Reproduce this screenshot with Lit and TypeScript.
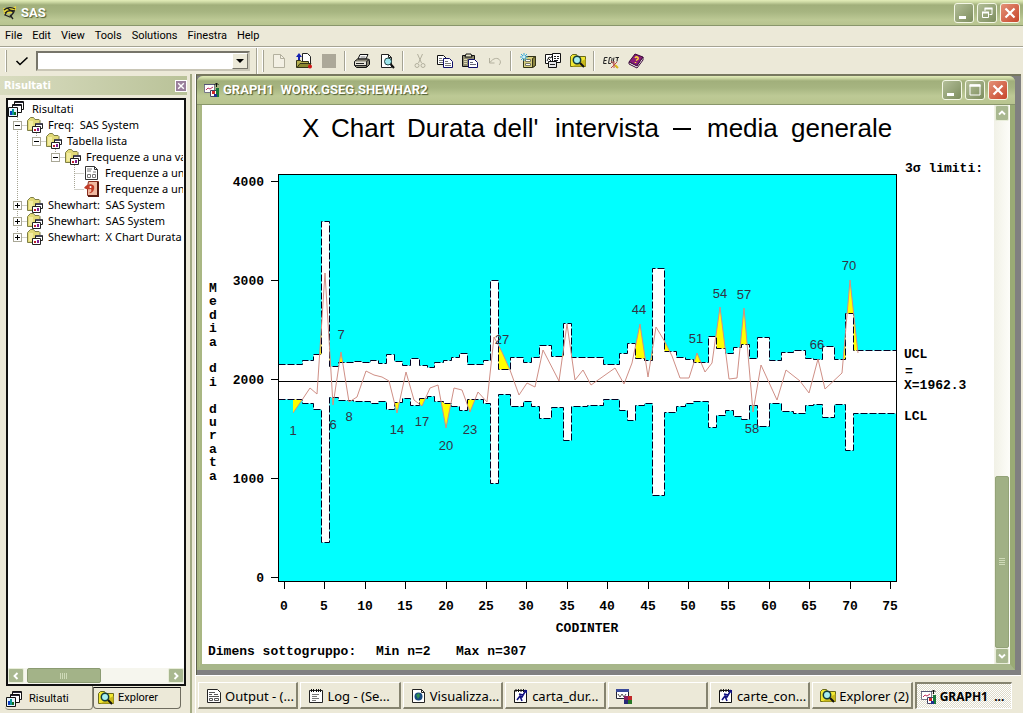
import { LitElement, html, svg, css, nothing } from "lit";
import { customElement, property } from "lit/decorators.js";
import { classMap } from "lit/directives/class-map.js";

const folder = svg`<path d="M.5 13.500V3.500l3-3h3l1.500 2h4l1 1v10z" fill="#e2da78" stroke="#7e7e46"/><path d="M2 4h4v8H2z" fill="#f2eca0"/><path d="M8.500 6.500h7v5h-7z" fill="#fff" stroke="#222"/><path d="M9 6h6v2H9z" fill="#445"/><path d="M5.500 9.500h8v6h-8z" fill="#fff" stroke="#222"/><path d="M7 12h2v2H7z" fill="#c02030"/><path d="M10 11h2v3h-2z" fill="#802090"/>`;
const results = svg`<path d="M6.500.5h9v8h-9z" fill="#fff" stroke="#111"/><path d="M7 1h8v1H7z" fill="#223"/><path d="M4.500 3.500h9v8h-9z" fill="#fff" stroke="#111"/><path d="M5 4h8v1H5z" fill="#223"/><path d="M.5 6.500h9v9h-9z" fill="#e8f4ff" stroke="#111"/><path d="M2 10h2v4H2z" fill="#0a3cc0"/><path d="M4 8h2v6H4z" fill="#0a9a9a"/><path d="M6 11h2v3H6z" fill="#107020"/>`;
const explorer = svg`<path d="M.5 13.500v-10l2-2h4l1 2h8v10z" fill="#f2e832" stroke="#6b6b1a"/><path d="M2 13.500h13.500V6z" fill="#c9b91c"/><circle cx="7" cy="7" r="3.700" fill="#a8f0f0" stroke="#143c3c" stroke-width="1.500"/><path d="M10 10l4 4" stroke="#111" stroke-width="2"/>`;
const chartWin = svg`<path d="M.5 2.500h10v8H.5z" fill="#fff" stroke="#778"/><path d="M0 2h11v1H0z" fill="#557"/><path d="M2 8l2-2 2 1 3-2" fill="none" stroke="#c03060"/><path d="M12.500 1v4M10.500 3l2-2 2 2" stroke="#111" fill="none"/><path d="M6.500 8.500h6v6h-6z" fill="#fff" stroke="#446"/><path d="M8 9h3v3H8z" fill="#d02828"/><path d="M12 6h3v9h-3z" fill="#187838"/><path d="M10 12h3v3h-3z" fill="#203090"/>`;
const program = svg`<path d="M1.500 2.500h12v12h-12z" fill="#fff" stroke="#111"/><path d="M3 1v3M5.500 1v3M8 1v3M10.500 1v3" stroke="#111"/><path d="M4 12l3-4 2 1 4-7M6 6l4 1M7 8l2 5" stroke="#101080" stroke-width="1.600" fill="none"/><path d="M10 2h4v4z" fill="#101080"/>`;

const icons: Record<string, unknown> = {
  folder, results, explorer, chartWin, program,
  sas: svg`<path d="M1 3h9l4-2v4l-4 3-8 1z" fill="#e8d838"/><path d="M2 5c3-3 8-3 11-1M3 8c3-3 6-3 10-2M5 6l-2 4 5 2 4-5M8 10l3 4M5 3l6 4" fill="none" stroke="#222" stroke-width="1.300"/>`,
  report: svg`<path d="M1.500 1.500h9l3 3v10h-12z" fill="#fff" stroke="#333"/><path d="M10.500 1.500v3h3" fill="none" stroke="#333"/><path d="M3 4h5M3 6h4M9 7h3M3.500 9.500h3v3h-3zM8.500 9.500h3v3h-3z" fill="none" stroke="#777"/>`,
  html: svg`<path d="M4.500.5h10v14h-11V6z" fill="#f0b8a0" stroke="#8b2f20"/><path d="M14 1v14H4" fill="none" stroke="#5a1a10" stroke-width="2"/><path d="M0 7c2-4 8-5 10-2 1 4-2 8-5 7 2-1 3-2 2-4-2 0-4 1-7-1z" fill="#c03c28"/><circle cx="6.500" cy="6" r="1" fill="#fff"/>`,
  output: svg`<path d="M1.500 1.500h10l3 3v10h-13z" fill="#fff" stroke="#222"/><path d="M3 4.500h6M3 6.500h3M8 6.500h4M3 8.500h10M3.500 10.500h3v2h-3zM8.500 10.500h4v2h-4z" fill="none" stroke="#555"/>`,
  log: svg`<path d="M1.500 2.500h13v12h-13z" fill="#fff" stroke="#222"/><path d="M3.500 1v3M5.500 1v3M8.500 1v3M10.500 1v3M12.500 1v3" stroke="#111"/><path d="M4 6.500h7M4 8.500h5M4 10.500h7M4 12.500h4" stroke="#777"/>`,
  viewer: svg`<path d="M1.500 1.500h9l3 3v10h-12z" fill="#fff" stroke="#222"/><path d="M10.500 1.500v3h3" fill="none" stroke="#222"/><circle cx="7.500" cy="8.500" r="4" fill="#174a80"/><path d="M5 7l3-2 1 3-2 3z" fill="#2f8f50"/>`,
  editor: svg`<path d="M.5 1.500h12v9H.5z" fill="#fff" stroke="#223"/><path d="M0 1h13v3H0z" fill="#3a4a9a"/><path d="M2 6l2 3 2-3 2 3 2-3" fill="none" stroke="#555"/><path d="M8 8h4v4H8z" fill="#8a2060"/><path d="M12 8h4v4h-4z" fill="#c02828"/><path d="M8 12h4v4H8z" fill="#282878"/><path d="M12 12h4v4h-4z" fill="#287828"/>`,
  check: svg`<path d="M2.500 8l3.500 3.500L13.500 4.500" fill="none" stroke="#000" stroke-width="1.600"/>`,
  newDoc: svg`<path d="M2.500 1.500h7l4 4v9h-11z" fill="#f3f0e4" stroke="#b3b09e"/><path d="M9.500 1.500v4h4" fill="none" stroke="#b3b09e"/>`,
  open: svg`<path d="M6.500.5h5l3 3v8h-8z" fill="#fff" stroke="#222"/><path d="M3 0L0 4h2v4h2V4h2z" fill="#1420b0"/><path d="M.5 14.500v-7h4l1 1h7v6z" fill="#b6b050" stroke="#333318"/><path d="M1 14.500l3-4h11l-3 4z" fill="#8a8630" stroke="#333318"/><circle cx="14" cy="13.500" r="2" fill="#d01818"/>`,
  save: svg`<path d="M1 1h14v14H1z" fill="#aca899"/>`,
  print: svg`<path d="M4 6l2-4.500h8L12 6z" fill="#fff" stroke="#111"/><path d="M6.500 4h5" stroke="#777"/><path d="M.5 8.500l3-2.500h11l1 1.500v4l-3 3H2.500l-2-2z" fill="#8a8776" stroke="#111"/><path d="M1 8.500h11v4H1z" fill="#e8e5da"/><path d="M12.500 8.500l3-2M12.500 8.500v5.500M1 12.500h11M2 10.500h8" stroke="#222"/>`,
  preview: svg`<path d="M2.500 1.500h7l3 3v10h-10z" fill="#fff" stroke="#222"/><path d="M9.500 1.500v3h3" fill="none" stroke="#222"/><circle cx="9" cy="8.500" r="3.500" fill="#a0e8ee" stroke="#244"/><path d="M11.500 11l3.500 4" stroke="#111" stroke-width="2"/>`,
  cut: svg`<path d="M5.500 1l4 9M10.500 1l-4 9" stroke="#b3b09e" fill="none"/><circle cx="5" cy="12.500" r="2" fill="none" stroke="#b3b09e"/><circle cx="11" cy="12.500" r="2" fill="none" stroke="#b3b09e"/>`,
  copy: svg`<path d="M.5 2.500h6l3 3v6h-9z" fill="#fff" stroke="#111"/><path d="M2 5.500h3M2 7.500h5M2 9.500h5" stroke="#777"/><path d="M6.500 5.500h6l3 3v6h-9z" fill="#fff" stroke="#10106a"/><path d="M8 8.500h3M8 10.500h6M8 12.500h6" stroke="#777"/>`,
  paste: svg`<path d="M.5 2.500h12v11H.5z" fill="#8f8c70" stroke="#111"/><path d="M3 4h7l-1-3H4z" fill="#e9e6c8" stroke="#111"/><path d="M2 6.500h3M2 8.500h3M2 10.500h3" stroke="#ded9b0"/><path d="M6.500 6.500h6l3 3v5h-9z" fill="#fff" stroke="#10106a"/><path d="M8 9.500h3M8 11.500h6" stroke="#667"/>`,
  undo: svg`<path d="M2.500 5v5h5M3 9.500c3-4.500 8-5.500 10-2 1 2 0 3.500-1 4.500" fill="none" stroke="#b3b09e"/>`,
  library: svg`<path d="M3.500 5.500l3-2h9v9l-3 2h-9z" fill="#d8cf7c" stroke="#333318"/><path d="M12.500 5.500l3-2v9l-3 2z" fill="#8c8540" stroke="#333318"/><path d="M5.500 6.500h5v2h-5zM5.500 10.500h5v2h-5z" fill="#fff" stroke="#776"/><path d="M4 0v8M0 4h8M1 1l6 6M7 1L1 7" stroke="#35a8d8"/><circle cx="4" cy="4" r="1.500" fill="#c8f0ff"/>`,
  windows: svg`<path d="M.5 1.500h8v9h-8z" fill="#fff" stroke="#111"/><path d="M7.500.5h8v9h-8z" fill="#fff" stroke="#111"/><path d="M3.500 8.500h8v6h-8z" fill="#e8e8e8" stroke="#111"/><path d="M2 8l2-4 2 1 1-2M3 5l3 3M9 3.500h2M9 5.500h2M12 3.500h2M12 5.500h2M9 7.500h4M5 11.500h5" stroke="#222" fill="none"/>`,
  edit: svg`<path d="M4.500 4.500h-3l-1 6h3M1 7.500h2.500M5.500 10.500l1-6h1.500l1 1-.5 4-1 1zM10 10l1-5.500M12.500 4.500h3.500M14.500 4.500l-.500 4" fill="none" stroke="#222"/><path d="M8 8l6 7M14 9l-6 6M11 8v7" stroke="#b84a4a"/><path d="M12 12l3 3" stroke="#d8b820" stroke-width="2"/>`,
  help: svg`<path d="M1 9l6-8 8 3-6 9z" fill="#8a1c78" stroke="#3a0838"/><path d="M1 9l8 4 6-9v3l-6 8-8-4z" fill="#fff" stroke="#3a0838"/><path d="M7 5c1-2 4-1 3 1L8 7.500M7.500 9v1" fill="none" stroke="#ffd83a" stroke-width="1.500"/>`,
  min: svg`<path d="M3 11h7v3H3z" fill="#fff"/>`,
  max: svg`<path d="M3 3h10v10H3z" fill="none" stroke="#fff"/><path d="M2.500 3.500h11" stroke="#fff" stroke-width="2.500"/>`,
  restore: svg`<path d="M6 6V3.500h7v6h-2.500" fill="none" stroke="#fff"/><path d="M5.500 3.500h8" stroke="#fff" stroke-width="2"/><path d="M3.500 7.500h6v5h-6z" fill="none" stroke="#fff"/><path d="M3 7.500h7" stroke="#fff" stroke-width="2"/>`,
  close: svg`<path d="M3.500 3.500l9 9M12.500 3.500l-9 9" stroke="#fff" stroke-width="2.200"/>`,
  up: svg`<path d="M4 10l4-4 4 4" fill="none" stroke="#fff" stroke-width="2.500"/>`,
  down: svg`<path d="M4 6l4 4 4-4" fill="none" stroke="#fff" stroke-width="2.500"/>`,
  left: svg`<path d="M10 4L6 8l4 4" fill="none" stroke="#fff" stroke-width="2.500"/>`,
  right: svg`<path d="M6 4l4 4-4 4" fill="none" stroke="#fff" stroke-width="2.500"/>`,
};

const icon = (name: string) =>
  html`<svg class="icon" viewBox="0 0 16 16" width="16" height="16" aria-hidden="true">${icons[name]}</svg>`;

const iconCss = css`
  :host { display: block; box-sizing: border-box; }
  * { box-sizing: border-box; }
  .icon { display: block; flex: none; }
  button { font: inherit; color: inherit; margin: 0; padding: 0; border: 0; background: none; }
`;

/* Title bar with the three caption buttons */
@customElement("caption-bar")
class CaptionBar extends LitElement {
  @property() icon = "sas";
  @property() label = "";
  @property() middle = "restore";
  static styles = [iconCss, css`
    .bar {
      display: flex; align-items: center; height: 100%; gap: 3px; padding: 0 var(--end, 3px) 0 var(--start, 2px);
      background: linear-gradient(#e3edb9 0, #cdd9a4 2px, #a1af7b 5px, #a7b581 12px, #bdc995 20px, #b8c48f 100%);
      border-bottom: 1px solid #89966b;
    }
    .title {
      flex: 1; margin: 0; white-space: pre; color: #fff; font: bold 13px/18px Roboto, "Trebuchet MS", sans-serif;
      text-shadow: 1px 1px 1px #4c5a30;
    }
    .btn {
      width: 20px; height: 20px; display: grid; place-items: center; border: 1px solid #f4f7e6;
      border-radius: 3px; background: linear-gradient(135deg, #b3be98, #7d8d5e);
    }
    .close { background: linear-gradient(135deg, #e39278, #c8452b); }
  `];
  render() {
    return html`<div class="bar">
      ${icon(this.icon)}
      <h1 class="title">${this.label}</h1>
      <button class="btn" aria-label="Riduci a icona">${icon("min")}</button>
      <button class="btn" aria-label="Ingrandisci">${icon(this.middle)}</button>
      <button class="btn close" aria-label="Chiudi">${icon("close")}</button>
    </div>`;
  }
}

type Step = [number, number];
/* [right edge, level] of each step of the control limits */
const UPPER: Step[] = [
  [302, 364], [313, 360], [321, 354], [329, 221], [338, 366], [353, 362], [362, 361], [370, 362], [378, 360], [386, 363],
  [394, 354], [402, 361], [410, 365], [419, 358], [427, 365], [434, 367], [443, 362], [451, 360], [459, 357], [467, 353],
  [483, 364], [490, 360], [498, 280], [510, 369], [523, 357], [531, 362], [539, 357], [551, 345], [563, 356], [571, 323],
  [603, 357], [619, 364], [627, 353], [635, 343], [644, 358], [652, 360], [664, 268], [676, 351], [685, 357], [693, 359],
  [708, 362], [716, 336], [725, 348], [733, 353], [741, 347], [749, 344], [757, 358], [769, 337], [781, 360], [793, 352],
  [805, 350], [813, 358], [822, 359], [834, 346], [845, 359], [853, 313], [896, 350],
];
const LOWER: Step[] = [
  [302, 399], [313, 403], [321, 409], [329, 542], [338, 397], [353, 400], [370, 401], [378, 403], [386, 401],
  [394, 409], [402, 402], [410, 398], [419, 405], [427, 398], [434, 396], [443, 401], [451, 403], [459, 406], [467, 410],
  [483, 399], [490, 403], [498, 483], [510, 394], [523, 406], [531, 401], [539, 406], [551, 418], [563, 407], [571, 440],
  [587, 406], [603, 405], [619, 399], [627, 410], [635, 420], [644, 405], [652, 403], [664, 495], [676, 412], [685, 406],
  [693, 403], [708, 401], [716, 427], [725, 415], [733, 410], [741, 416], [749, 419], [757, 405], [769, 426], [781, 403],
  [793, 411], [805, 413], [813, 405], [822, 404], [834, 417], [845, 404], [853, 450], [896, 413],
];
const MEANS: Step[] = [
  [293, 413], [302, 400], [310, 388], [317, 394], [325, 273], [333, 405], [341, 352], [349, 402], [357, 397], [366, 371],
  [374, 375], [382, 377], [389, 381], [397, 413], [406, 372], [414, 400], [422, 406], [430, 388], [438, 385], [446, 428],
  [454, 388], [462, 390], [470, 412], [478, 392], [487, 402], [494, 337], [502, 352], [510, 370], [519, 395], [527, 383],
  [535, 387], [543, 350], [559, 381], [567, 324], [575, 380], [583, 370], [591, 385], [615, 368], [624, 384], [632, 363],
  [640, 324], [648, 377], [656, 327], [665, 342], [672, 356], [680, 378], [689, 378], [697, 353], [705, 372], [712, 363],
  [720, 307], [729, 379], [737, 378], [744, 308], [753, 412], [761, 365], [777, 400], [786, 370], [800, 381], [809, 393],
  [818, 359], [825, 389], [842, 373], [850, 280], [858, 353],
];
const FLAGS: [string, number, number][] = [
  ["1", 293, 435], ["6", 333, 429], ["7", 341, 339], ["8", 349, 421], ["14", 397, 434], ["17", 422, 426], ["20", 446, 450],
  ["23", 470, 434], ["27", 502, 344], ["44", 639, 314], ["51", 696, 343], ["54", 720, 298], ["57", 744, 299],
  ["58", 752, 433], ["66", 817, 349], ["70", 849, 270],
];
/* Words of the heading, each with its starting x */
const HEADING: [string, number][] = [
  ["X", 302], ["Chart", 331], ["Durata", 407], ["dell'", 493], ["intervista", 555], ["media", 707], ["generale", 791],
];

const stepPath = (steps: Step[]) =>
  steps.map(([x, y], i) => `${i ? "L" : "M"}${(i ? steps[i - 1][0] : 278) + 0.5} ${y + 0.5}H${x + 0.5}`).join("");
const bandPath = () => {
  const back = LOWER.map(([x, y], i) => [x, y, i ? LOWER[i - 1][0] : 278]).reverse();
  return stepPath(UPPER) + back.map(([x, y, x0]) => `L${x + 0.5} ${y + 0.5}H${x0 + 0.5}`).join("") + "Z";
};
const line = MEANS.map((p) => p.join(",")).join(" ");

/* Shewhart mean chart */
@customElement("shewhart-chart")
class ShewhartChart extends LitElement {
  static styles = css`
    :host { display: block; min-width: 0; }
    .chart { display: block; width: 100%; height: 100%; background: #fff; }
    .heading { font: 26px "Liberation Sans", Arial, sans-serif; }
    .mono { font: bold 13px "Liberation Mono", "Courier New", monospace; white-space: pre; }
    .mid { text-anchor: middle; }
    .end { text-anchor: end; }
    .flag { font: 13px "Liberation Sans", Arial, sans-serif; text-anchor: middle; fill: #334; }
    .axis { stroke: #000; fill: none; }
    .dash { stroke: #000; stroke-width: 2; }
    .plot { fill: #0ff; }
    .out { fill: #ff0; }
    .band { fill: #fff; }
    .limit { fill: none; stroke: #002; stroke-dasharray: 7 2; }
    .mean { fill: none; stroke: #cf8f86; }
  `;
  render() {
    const ticks = Array.from({ length: 16 }, (_, i) => ({ n: i * 5, x: Math.round(284 + i * 40.4) }));
    return html`<svg class="chart" viewBox="202 105 792 559" role="img" aria-label="X Chart Durata dell' intervista">
      <text class="heading" y="137">${HEADING.map(([w, x]) => svg`<tspan x=${x}>${w}</tspan>`)}</text>
      <path class="dash" d="M673 129h18"/>
      <rect class="plot" x="278" y="174" width="618" height="407"/>
      <polygon class="out" points="293,381 ${line} 858,381"/>
      <path class="band" d=${bandPath()}/>
      <path class="limit" d=${stepPath(UPPER)}/>
      <path class="limit" d=${stepPath(LOWER)}/>
      <path class="axis" d="M278 381.500H896"/>
      <polyline class="mean" points=${line}/>
      <rect class="axis" x="278.500" y="174.500" width="618" height="407"/>
      ${FLAGS.map(([t, x, y]) => svg`<text class="flag" x=${x} y=${y}>${t}</text>`)}
      ${[0, 1, 2, 3, 4].map((k) => svg`
        <path class="axis" d="M271 ${577.5 - k * 99}h7"/>
        <text class="mono end" x="264" y=${582 - k * 99}>${k * 1000}</text>`)}
      ${ticks.map(({ n, x }) => svg`
        <path class="axis" d="M${x + 0.5} 581v8"/>
        <text class="mono mid" x=${x} y="610">${n}</text>`)}
      ${[..."Media di durata"].map((c, i) => svg`<text class="mono mid" x="213" y=${Math.round(292 + i * 13.4)}>${c}</text>`)}
      <text class="mono mid" x="587" y="632">CODINTER</text>
      <text class="mono" x="208" y="655">Dimens sottogruppo:</text>
      <text class="mono" x="376" y="655">Min n=2</text>
      <text class="mono" x="456" y="655">Max n=307</text>
      <text class="mono" x="905" y="172">3σ limiti:</text>
      <text class="mono" x="904" y="358">UCL</text>
      <text class="mono" x="905" y="375">=</text>
      <text class="mono" x="904" y="389">X=1962.3</text>
      <text class="mono" x="904" y="420">LCL</text>
    </svg>`;
  }
}

interface Row { guide: string; open?: boolean; icon: string; text: string }
/* guide: one character per indent column: T branch, L last branch, space empty, | passing line */
const TREE: Row[] = [
  { guide: "", icon: "results", text: "Risultati" },
  { guide: "T", open: true, icon: "folder", text: "Freq:  SAS System" },
  { guide: "|L", open: true, icon: "folder", text: "Tabella lista" },
  { guide: "| L", open: true, icon: "folder", text: "Frequenze a una va" },
  { guide: "|  T", icon: "report", text: "Frequenze a una" },
  { guide: "|  L", icon: "html", text: "Frequenze a una" },
  { guide: "T", open: false, icon: "folder", text: "Shewhart:  SAS System" },
  { guide: "T", open: false, icon: "folder", text: "Shewhart:  SAS System" },
  { guide: "L", open: false, icon: "folder", text: "Shewhart:  X Chart Durata d" },
];

@customElement("results-panel")
class ResultsPanel extends LitElement {
  static styles = [iconCss, css`
    .panel { height: 100%; display: flex; flex-direction: column; background: #ece9d8; padding: 2px 4px 3px 5px; }
    .head {
      display: flex; align-items: center; justify-content: space-between; height: 19px; margin: 0 -1px 3px -5px; padding: 0 0 0 4px;
      background: linear-gradient(90deg, #d9dcc0, #b9c298);
    }
    .name { margin: 0; color: #fff; font: bold 11px/16px "DejaVu Sans Condensed", Verdana, sans-serif; }
    .x { width: 12px; height: 12px; border: 1px solid #fff; background: #9a7f9c; display: grid; place-items: center; }
    .x .icon { width: 10px; height: 10px; }
    .box { flex: 1; min-height: 0; display: flex; flex-direction: column; border: 2px solid #111; background: #fff; margin-left: 1px; }
    .tree { flex: 1; list-style: none; margin: 0 1px 0 0; padding: 1px 0 0; overflow: hidden; font: 11px/16px "Noto Sans", Tahoma, sans-serif; }
    .row { display: flex; height: 16px; align-items: center; white-space: pre; }
    .row .icon { margin-right: 5px; }
    .row:first-child .icon { margin-right: 8px; }
    .cell { flex: none; width: 19px; height: 16px; display: grid; place-items: center; }
    .guide { grid-area: 1 / 1; }
    .toggle { grid-area: 1 / 1; width: 9px; height: 9px; border: 1px solid #a9a796; background: #fff; }
    .toggle .icon { width: 7px; height: 7px; }
    .scroll { display: flex; height: 16px; gap: 3px; background: #f6f6ee; }
    .arrow { width: 16px; height: 15px; border-radius: 2px; border: 1px solid #e9eeda; background: #a9b890; display: grid; place-items: center; }
    .arrow .icon { width: 14px; height: 12px; }
    .thumb { width: 74px; height: 15px; border: 1px solid #8b9b72; border-radius: 2px; background: #a3b388; display: flex; justify-content: center; align-items: center; }
    .grip { width: 8px; height: 6px; background: repeating-linear-gradient(90deg, #cfdab8 0 1px, #a3b388 1px 2px); }
    .space { flex: 1; }
    .tabs { display: flex; height: 24px; font: 11px/20px Roboto, Tahoma, sans-serif; }
    .tab { width: 88px; display: flex; align-items: center; gap: 7px; padding: 3px 0 0 1px; border-bottom: 1px solid #8a8878; border-right: 1px solid #8a8878; border-radius: 0 0 4px 4px; }
    .tab.back { height: 22px; margin-top: 1px; gap: 4px; padding: 0 0 0 4px; border: 1px solid #6f6d60; border-top-color: #111; }
  `];
  private cell(c: string, last: boolean, row: Row) {
    return html`<span class="cell">
      <svg class="guide" width="19" height="16" aria-hidden="true">
        ${c === " " ? nothing : svg`<path d="M9.500 0V${c === "L" ? 8 : 16}${c === "|" ? "" : "M9.500 8.500H19"}" stroke="#a5a392" stroke-dasharray="1 1" fill="none"/>`}
      </svg>
      ${last && row.open !== undefined
        ? html`<button class="toggle" aria-label=${row.open ? "Comprimi" : "Espandi"}><svg class="icon" viewBox="0 0 7 7" aria-hidden="true"><path d="M1 3.500h5${row.open ? "" : "M3.500 1v5"}" stroke="#000"/></svg></button>`
        : nothing}
    </span>`;
  }
  render() {
    return html`<div class="panel">
      <div class="head"><h2 class="name">Risultati</h2><button class="x" aria-label="Chiudi Risultati">${icon("close")}</button></div>
      <div class="box">
        <ul class="tree">
          ${TREE.map((row) => html`<li class="row">${[...row.guide].map((c, i) => this.cell(c, i === row.guide.length - 1, row))}${icon(row.icon)}<span>${row.text}</span></li>`)}
        </ul>
        <div class="scroll">
          <button class="arrow" aria-label="Scorri a sinistra">${icon("left")}</button>
          <div class="thumb"><span class="grip"></span></div>
          <span class="space"></span>
          <button class="arrow" aria-label="Scorri a destra">${icon("right")}</button>
        </div>
      </div>
      <div class="tabs">
        <button class="tab">${icon("results")}Risultati</button>
        <button class="tab back">${icon("explorer")}Explorer</button>
      </div>
    </div>`;
  }
}

const MENUS = ["File", "Edit", "View", "Tools", "Solutions", "Finestra", "Help"];
const TOOLS: [string, string][][] = [
  [["newDoc", "Nuovo"], ["open", "Apri"], ["save", "Salva"]],
  [["print", "Stampa"], ["preview", "Anteprima"]],
  [["cut", "Taglia"], ["copy", "Copia"], ["paste", "Incolla"], ["undo", "Annulla"]],
  [["library", "Nuova libreria"], ["windows", "Finestre"], ["explorer", "Explorer"]],
  [["edit", "Modifica grafico"], ["help", "Guida"]],
];
const TASKS: [string, string][] = [
  ["output", "Output - (..."], ["log", "Log - (Se..."], ["viewer", "Visualizza..."], ["program", "carta_dur..."],
  ["editor", ""], ["program", "carte_con..."], ["explorer", "Explorer (2)"], ["chartWin", "GRAPH1  ..."],
];

@customElement("app-root")
class AppRoot extends LitElement {
  static styles = [iconCss, css`
    :host { height: 100vh; overflow: hidden; background: #ece9d8; color: #000; }
    .app { height: 100%; display: flex; flex-direction: column; }
    .top { flex: none; height: 26px; }
    .menu { flex: none; display: flex; gap: 10px; height: 21px; padding: 1px 5px 2px; border-bottom: 1px solid #a5a393; font: 11px/18px Roboto, Tahoma, sans-serif; }
    .tools { flex: none; display: flex; align-items: center; height: 27px; border-top: 1px solid #fff; padding-left: 5px; }
    .grip { width: 2px; height: 22px; border-left: 1px solid #fff; border-right: 1px solid #a5a393; }
    .ok { width: 29px; display: grid; place-items: center; }
    .combo { position: relative; width: 214px; height: 20px; }
    .command { display: block; width: 100%; height: 20px; appearance: none; border: 2px solid #77756a; border-right-color: #c9c6b6; border-bottom-color: #c9c6b6; border-radius: 0; background: #fff; }
    .drop { position: absolute; top: 2px; right: 2px; width: 16px; height: 16px; background: #ece9d8; border: 1px solid #fff; border-right-color: #77756a; border-bottom-color: #77756a; pointer-events: none; display: grid; place-items: center; }
    .split { width: 2px; height: 26px; margin: 0 4px 0 6px; border-left: 1px solid #a5a393; border-right: 1px solid #fff; }
    .group { display: flex; }
    .tool { width: 25px; height: 22px; display: grid; place-items: center; }
    .sep { width: 2px; height: 20px; margin: 0 3px; border-left: 1px solid #a5a393; border-right: 1px solid #fff; }
    .groups { display: flex; align-items: center; padding-left: 2px; }
    .body { flex: 1; min-height: 0; display: flex; }
    .side { flex: none; width: 190px; }
    .edge { flex: none; width: 6px; background: #ece9d8; border-left: 2px solid #a3aa84; border-right: 1px solid #fff; }
    .work { flex: 1; min-width: 0; display: flex; flex-direction: column; padding-right: 2px; }
    .mdi { flex: 1; min-height: 0; display: flex; background: #808080; border-top: 2px solid #77785f; border-left: 1px solid #5c5f4a; padding: 0 6px 5px 0; }
    .child { flex: 1; min-width: 0; display: flex; flex-direction: column; background: #b1bf8a; border-radius: 6px 6px 0 0; overflow: hidden; }
    .cap { --start: 7px; --end: 7px; flex: none; height: 29px; }
    .client { flex: 1; min-height: 0; display: flex; border: solid #a9b783; border-width: 0 5px 6px; border-left-style: double; border-right-color: #9aab75; border-bottom-color: #a7b68a; }
    .graph { flex: 1; }
    .vscroll { flex: none; width: 16px; display: flex; flex-direction: column; align-items: center; background: linear-gradient(90deg, #f1f1e6, #fdfdf9); }
    .arrow { width: 14px; height: 16px; border: 1px solid #e9eeda; border-radius: 2px; background: #a9b890; display: grid; place-items: center; }
    .arrow .icon { width: 12px; height: 14px; }
    .before { flex: 355; }
    .thumb { flex: 170; width: 14px; background: #a0b085; border: 1px solid #93a378; border-radius: 2px; display: grid; place-items: center; }
    .lines { width: 6px; height: 8px; background: repeating-linear-gradient(#cfdab8 0 1px, #a0b085 1px 2px); }
    .bar { flex: none; height: 38px; display: flex; gap: 2px; padding: 6px 9px 4px 2px; border-top: 1px solid #fff; font: 13px/18px "Noto Sans", Tahoma, sans-serif; }
    .task { flex: 1 1 0; min-width: 0; overflow: hidden; display: flex; align-items: center; gap: 3px; padding: 2px 0 0 7px; white-space: pre; border: 1px solid #fff; border-right: 2px solid #85836f; border-bottom: 2px solid #85836f; }
    .active { font: bold 12px/18px "Noto Sans", Tahoma, sans-serif; border: 1px solid #fff; border-top: 2px solid #85836f; border-left: 2px solid #85836f; background: repeating-conic-gradient(#fff 0 25%, #dedbca 0 50%) 0 0 / 2px 2px; padding-left: 4px; }
  `];
  render() {
    return html`<div class="app">
      <caption-bar class="top" icon="sas" label="SAS"></caption-bar>
      <nav class="menu" aria-label="Menu">${MENUS.map((m) => html`<button>${m}</button>`)}</nav>
      <div class="tools">
        <span class="grip"></span>
        <button class="ok" aria-label="Esegui comando">${icon("check")}</button>
        <span class="combo">
          <select class="command" aria-label="Comando"></select>
          <span class="drop"><svg width="8" height="4" aria-hidden="true"><path d="M0 0h8L4 4z"/></svg></span>
        </span>
        <span class="split"></span><span class="grip"></span>
        <div class="groups">
          ${TOOLS.map((g, i) => html`${i ? html`<span class="sep"></span>` : nothing}
            <div class="group">${g.map(([n, l]) => html`<button class="tool" aria-label=${l}>${icon(n)}</button>`)}</div>`)}
        </div>
      </div>
      <div class="body">
        <results-panel class="side"></results-panel>
        <div class="edge"></div>
        <main class="work">
          <div class="mdi">
            <section class="child">
              <caption-bar class="cap" icon="chartWin" middle="max" label="GRAPH1  WORK.GSEG.SHEWHAR2"></caption-bar>
              <div class="client">
                <shewhart-chart class="graph"></shewhart-chart>
                <div class="vscroll">
                  <button class="arrow" aria-label="Scorri in alto">${icon("up")}</button>
                  <span class="before"></span>
                  <div class="thumb"><span class="lines"></span></div>
                  <button class="arrow" aria-label="Scorri in basso">${icon("down")}</button>
                </div>
              </div>
            </section>
          </div>
          <div class="bar">
            ${TASKS.map(([n, l], i) => html`<button class=${classMap({ task: true, active: i === 7 })} aria-label=${l || "Editor"}>${icon(n)}<span>${l}</span></button>`)}
          </div>
        </main>
      </div>
    </div>`;
  }
}
